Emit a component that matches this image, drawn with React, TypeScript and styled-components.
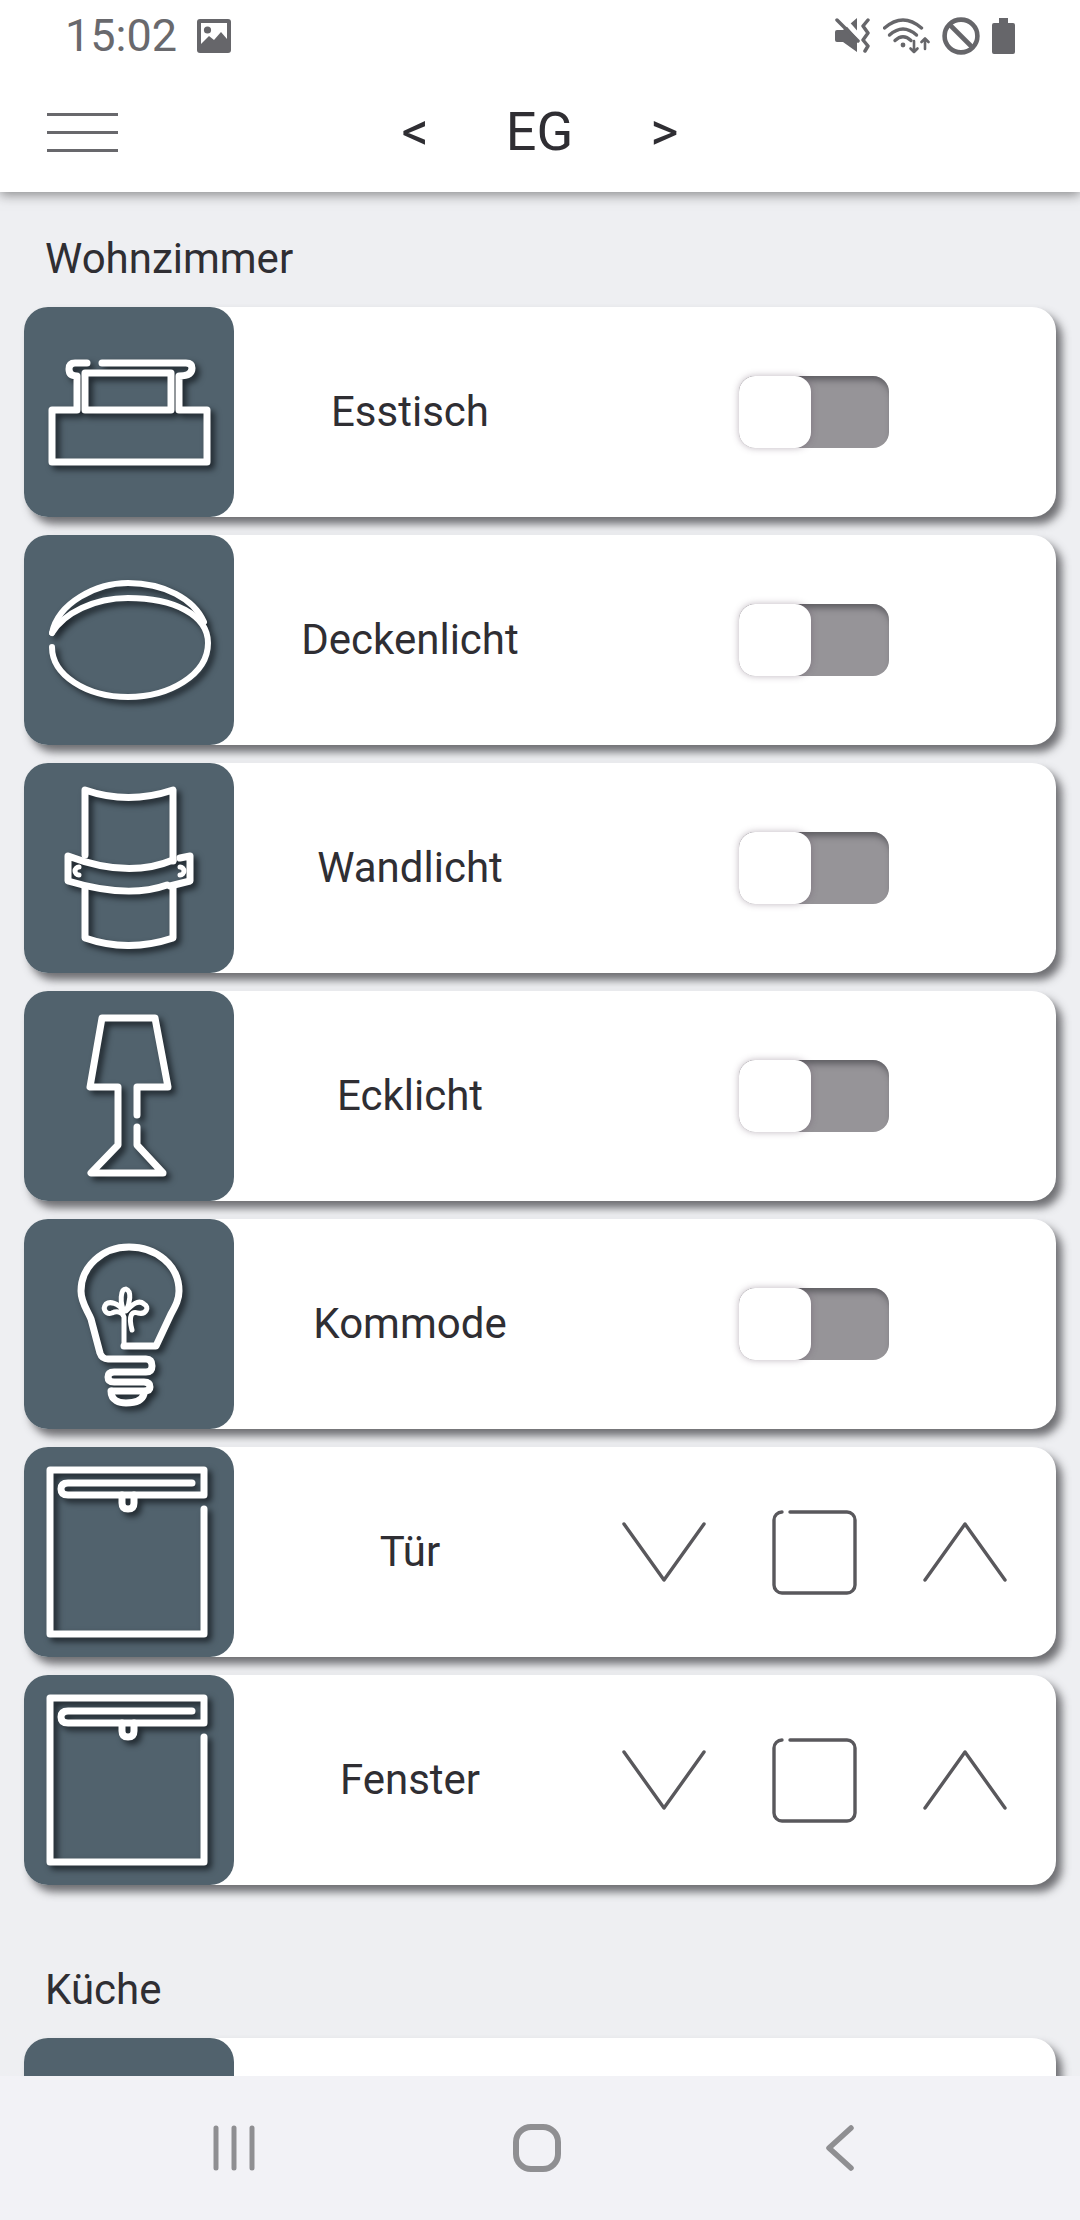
import React from 'react'
import styled, { createGlobalStyle } from 'styled-components'

const GlobalStyle = createGlobalStyle`
  html, body {
    margin: 0;
    padding: 0;
    background: #eeeff2;
    font-family: Roboto, "Liberation Sans", sans-serif;
  }
`

const Screen = styled.div`
  display: flex;
  flex-direction: column;
  width: 1080px;
  height: 2220px;
  overflow: hidden;
  background: #eeeff2;
`

const Header = styled.header`
  position: relative;
  z-index: 2;
  flex: 0 0 192px;
  background: #fff;
  box-shadow: 0 3px 11px rgba(40, 40, 40, 0.5);
`

const StatusBar = styled.div`
  display: flex;
  align-items: center;
  justify-content: space-between;
  height: 72px;
  padding: 0 65px 0 65px;
`

const StatusLeft = styled.div`
  display: flex;
  align-items: center;
  gap: 20px;
`

const Clock = styled.span`
  font-size: 45px;
  line-height: 72px;
  color: #69696d;
`

const StatusRight = styled.div`
  display: flex;
  align-items: center;
  gap: 12px;
`

const Toolbar = styled.div`
  display: grid;
  grid-template-columns: 1fr auto 1fr;
  align-items: center;
  height: 120px;
  padding: 0 47px;
`

const MenuButton = styled.div`
  display: flex;
  flex-direction: column;
  gap: 15px;
  width: 71px;

  span {
    display: block;
    height: 3px;
    background: #68686c;
  }
`

const FloorPicker = styled.div`
  display: flex;
  align-items: center;
  gap: 77px;
  font-size: 54px;
  line-height: 60px;
  color: #2f2e33;
`

const Content = styled.main`
  flex: 1;
  min-height: 0;
  overflow: hidden;
  padding: 42px 24px 0;
`

const Section = styled.section`
  margin-bottom: 80px;
`

const SectionTitle = styled.h2`
  margin: 0 0 23px 21px;
  font-size: 42px;
  font-weight: 400;
  line-height: 50px;
  color: #2f2e33;
`

const RowList = styled.div`
  display: flex;
  flex-direction: column;
  gap: 18px;
`

const Card = styled.div`
  display: flex;
  align-items: center;
  height: 210px;
  border-radius: 24px;
  background: #fff;
  box-shadow: 6px 7px 9px rgba(50, 50, 55, 0.68);
`

const Tile = styled.div`
  flex: 0 0 210px;
  height: 210px;
  border-radius: 24px;
  background: #51626d;
`

const TileIcon = styled.svg<{ $stroke?: number }>`
  display: block;
  width: 210px;
  height: 210px;
  fill: none;
  stroke: #fff;
  stroke-width: ${props => props.$stroke ?? 7};
  stroke-linecap: round;
  stroke-linejoin: round;
  filter: drop-shadow(4px 4px 3px rgba(15, 20, 25, 0.8));
`

const RowLabel = styled.div`
  flex: 0 0 352px;
  font-size: 42px;
  line-height: 50px;
  text-align: center;
  color: #2f2e33;
`

const Toggle = styled.div`
  display: flex;
  width: 150px;
  height: 72px;
  margin-left: 153px;
  border-radius: 16px;
  background: #969498;
  box-shadow: inset 0 7px 6px -3px rgba(40, 40, 45, 0.5);
`

const ToggleKnob = styled.div`
  width: 72px;
  height: 72px;
  border-radius: 16px;
  background: #fff;
  box-shadow: 0 0 7px rgba(90, 70, 90, 0.4);
`

const ShutterControls = styled.div`
  display: flex;
  align-items: center;
  gap: 66px;
  margin-left: 36px;
`

const ControlIcon = styled.svg`
  display: block;
  fill: none;
  stroke: #59585c;
  stroke-width: 3.4;
  stroke-linecap: round;
  stroke-linejoin: round;
`

const NavBar = styled.nav`
  position: relative;
  z-index: 2;
  flex: 0 0 144px;
  display: grid;
  grid-template-columns: repeat(3, 303px);
  align-items: center;
  justify-content: center;
  justify-items: center;
  padding-right: 6px;
  box-sizing: border-box;
  background: #f2f2f6;
`

const NavIcon = styled.svg`
  display: block;
  fill: none;
  stroke: #8f8f92;
  stroke-linecap: round;
  stroke-linejoin: round;
`

const ImageGlyph = () => (
  <svg width="34" height="34" viewBox="0 0 34 34">
    <rect width="34" height="34" rx="3" fill="#66666a" />
    <rect x="4" y="4" width="26" height="24" fill="#fff" />
    <circle cx="10.5" cy="11" r="3.6" fill="#66666a" />
    <path d="M4 25 L12 17 L17 21 L24 13 L30 20 V30 H4 Z" fill="#66666a" />
  </svg>
)

const MuteGlyph = () => (
  <svg width="36" height="36" viewBox="0 0 36 36">
    <path d="M0 14 Q0 12 2 12 H8 L22 0 V34 L8 24 H2 Q0 24 0 22 Z" fill="#66666a" />
    <path d="M5 -3 L27 22" stroke="#fff" strokeWidth="5" />
    <path d="M2 2 L23 23" stroke="#66666a" strokeWidth="3.5" strokeLinecap="round" />
    <path d="M33 2 L28 8 L33 15 L28 22 L33 28 L30 33" fill="none" stroke="#66666a" strokeWidth="3.5" strokeLinecap="round" strokeLinejoin="round" />
  </svg>
)

const WifiGlyph = () => (
  <svg width="47" height="36" viewBox="0 0 47 36" fill="none" stroke="#66666a" strokeWidth="3.4" strokeLinecap="round" strokeLinejoin="round">
    <path d="M1.5 10 Q20 -6 38.5 10" />
    <path d="M6.5 17 Q20 5 33.5 17" />
    <path d="M12 22.5 Q20 15 28 22.5" />
    <circle cx="20" cy="27" r="2.4" fill="#66666a" stroke="none" />
    <path d="M31 23 V34 M27.5 30.5 L31 34 L34.5 30.5" strokeWidth="2.6" />
    <path d="M42 31 V20.5 M38.5 24 L42 20.5 L45.5 24" strokeWidth="2.6" />
  </svg>
)

const BlockGlyph = () => (
  <svg width="38" height="38" viewBox="0 0 38 38" fill="none" stroke="#66666a" strokeWidth="4.6">
    <circle cx="19" cy="19" r="16.4" />
    <path d="M7.5 7.5 L30.5 30.5" />
  </svg>
)

const BatteryGlyph = () => (
  <svg width="23" height="36" viewBox="0 0 23 36">
    <path d="M7 0 H16 V5 H21 Q23 5 23 7 V34 Q23 36 21 36 H2 Q0 36 0 34 V7 Q0 5 2 5 H7 Z" fill="#66666a" />
  </svg>
)

const TableIcon = () => (
  <TileIcon viewBox="0 0 210 210">
    <path d="M63 56 H51 Q45 56 45 62 Q45 69 53 69 V103 H28 V155 H183 V103 H155 V69 Q168 69 168 61 Q168 56 162 56 H78" />
    <path d="M61 103 V66 H147 V103 Z" />
  </TileIcon>
)

const CeilingIcon = () => (
  <TileIcon viewBox="0 0 210 210" $stroke={6}>
    <path d="M28 98 C34 68 72 48 104 48 C140 48 170 64 180 87" />
    <path d="M28 98 C40 78 70 63 104 63 C150 63 184 80 184 108 C184 140 145 162 104 162 C62 162 28 140 28 112" />
  </TileIcon>
)

const WallIcon = () => (
  <TileIcon viewBox="0 0 210 210">
    <path d="M61 92 V27 Q104 42 149 27 V98" />
    <path d="M156 95 L166 93 V118 L146 123" />
    <path d="M143 122 Q104 136 44 118 V93 Q104 116 149 97" />
    <path d="M61 125 V175 Q104 190 149 175 V123" />
    <path d="M55 104 a4 4 0 0 0 0 8 M156 104 a4 4 0 0 1 0 8" strokeWidth="5" />
  </TileIcon>
)

const LampIcon = () => (
  <TileIcon viewBox="0 0 210 210">
    <path d="M113 124 V96 H144 L131 27 H78 L66 96 H94 V154 L67 182 H139 L113 154 V136" />
  </TileIcon>
)

const BulbIcon = () => (
  <TileIcon viewBox="0 0 210 210">
    <path d="M100 127 H132 L147 95 C152 86 155 80 155 72 C155 46 132 28 105 28 C78 28 57 48 57 72 C57 84 64 92 67 100 L76 134 Q78 140 84 140 H122 Q128 140 128 147 Q128 153 122 153 H90 Q84 153 84 158 Q84 163 90 163 H120 Q126 163 126 168 Q126 172 120 172 H88" />
    <path d="M87 172 C87 182 96 184 102 184 C110 184 118 182 120 175" />
    <path d="M100 127 V98 C98 92 92 92 88 94 C82 96 78 90 82 85 C86 82 94 84 100 92 C96 84 96 70 102 70 C108 72 106 84 102 92 C108 86 114 80 120 85 C126 88 122 96 114 94 C108 92 104 96 108 111" strokeWidth="5" />
  </TileIcon>
)

const DoorIcon = () => (
  <TileIcon viewBox="0 0 210 210">
    <path d="M180 62 V187 H26 V23 H180 V48 H44 Q37 48 37 42 Q37 36 44 36 H168" />
    <path d="M98 48 V56 Q98 62 104 62 Q110 62 110 56 V48" />
  </TileIcon>
)

const ToggleSwitch = () => (
  <Toggle>
    <ToggleKnob />
  </Toggle>
)

const Shutter = () => (
  <ShutterControls>
    <ControlIcon width="84" height="60" viewBox="0 0 84 60">
      <path d="M2 2 L42 58 L82 2" />
    </ControlIcon>
    <ControlIcon width="85" height="85" viewBox="0 0 85 85">
      <path d="M18 2 H75 a8 8 0 0 1 8 8 V75 a8 8 0 0 1 -8 8 H10 a8 8 0 0 1 -8 -8 V10 a8 8 0 0 1 8 -8" />
    </ControlIcon>
    <ControlIcon width="84" height="60" viewBox="0 0 84 60">
      <path d="M2 58 L42 2 L82 58" />
    </ControlIcon>
  </ShutterControls>
)

interface Row {
  id: string
  name?: string
  icon: React.FC
  control?: React.FC
}

const sections: { title: string, rows: Row[] }[] = [
  {
    title: 'Wohnzimmer',
    rows: [
      { id: 'esstisch', name: 'Esstisch', icon: TableIcon, control: ToggleSwitch },
      { id: 'decke', name: 'Deckenlicht', icon: CeilingIcon, control: ToggleSwitch },
      { id: 'wand', name: 'Wandlicht', icon: WallIcon, control: ToggleSwitch },
      { id: 'eck', name: 'Ecklicht', icon: LampIcon, control: ToggleSwitch },
      { id: 'kommode', name: 'Kommode', icon: BulbIcon, control: ToggleSwitch },
      { id: 'tuer', name: 'Tür', icon: DoorIcon, control: Shutter },
      { id: 'fenster', name: 'Fenster', icon: DoorIcon, control: Shutter },
    ],
  },
  {
    title: 'Küche',
    // only the top of this card is on screen, above the nav bar
    rows: [
      { id: 'kueche', icon: CeilingIcon },
    ],
  },
]

const App: React.FC = () => (
  <Screen>
    <GlobalStyle />
    <Header>
      <StatusBar>
        <StatusLeft>
          <Clock>15:02</Clock>
          <ImageGlyph />
        </StatusLeft>
        <StatusRight>
          <MuteGlyph />
          <WifiGlyph />
          <BlockGlyph />
          <BatteryGlyph />
        </StatusRight>
      </StatusBar>
      <Toolbar>
        <MenuButton>
          <span />
          <span />
          <span />
        </MenuButton>
        <FloorPicker>
          <span>&lt;</span>
          <span>EG</span>
          <span>&gt;</span>
        </FloorPicker>
      </Toolbar>
    </Header>

    <Content>
      {sections.map(section => (
        <Section key={section.title}>
          <SectionTitle>{section.title}</SectionTitle>
          <RowList>
            {section.rows.map((row) => {
              const Icon = row.icon
              const Control = row.control
              return (
                <Card key={row.id}>
                  <Tile>
                    <Icon />
                  </Tile>
                  {row.name && <RowLabel>{row.name}</RowLabel>}
                  {Control && <Control />}
                </Card>
              )
            })}
          </RowList>
        </Section>
      ))}
    </Content>

    <NavBar>
      <NavIcon width="46" height="46" viewBox="0 0 46 46" strokeWidth="5">
        <path d="M5 3 V43 M23 3 V43 M41 3 V43" />
      </NavIcon>
      <NavIcon width="48" height="48" viewBox="0 0 48 48" strokeWidth="6">
        <rect x="3" y="3" width="42" height="42" rx="15" />
      </NavIcon>
      <NavIcon width="30" height="46" viewBox="0 0 30 46" strokeWidth="5.5">
        <path d="M26 3 L4 23 L26 43" />
      </NavIcon>
    </NavBar>
  </Screen>
)

export default App
